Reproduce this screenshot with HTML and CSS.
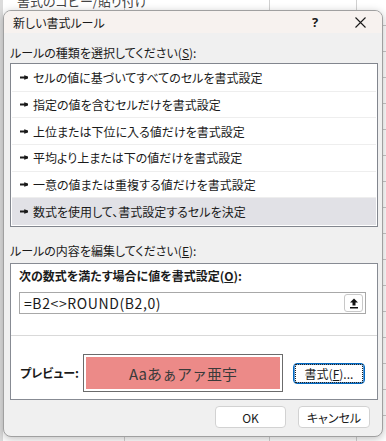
FILE: index.html
```html
<!DOCTYPE html>
<html lang="ja">
<head>
    <meta charset="UTF-8">
    <meta name="viewport" content="width=device-width, initial-scale=1.0">
    <title>新しい書式ルール</title>
    <link rel="stylesheet" href="styles.css">
</head>
<body>

    <span class="sheet-text">書式のコピー/貼り付け</span>

    <div class="dialog">
        <div class="titlebar">
            <span class="title">新しい書式ルール</span>
            <span class="help">?</span>
            <span class="close">
                <svg width="11" height="11" viewBox="0 0 11 11"><path d="M0.5 0.5L10.5 10.5M10.5 0.5L0.5 10.5" stroke="#1a1a1a" stroke-width="1.1" fill="none"/></svg>
            </span>
        </div>

        <div class="content">
            <div class="label">ルールの種類を選択してください(<u>S</u>):</div>
            <ul class="rules">
                <li><svg class="arrow" viewBox="0 0 8 5"><path d="M0 1.6h4.2V0.2L8 1.4v2.2L4.2 4.8V3.4H0z"/></svg>セルの値に基づいてすべてのセルを書式設定</li>
                <li><svg class="arrow" viewBox="0 0 8 5"><path d="M0 1.6h4.2V0.2L8 1.4v2.2L4.2 4.8V3.4H0z"/></svg>指定の値を含むセルだけを書式設定</li>
                <li><svg class="arrow" viewBox="0 0 8 5"><path d="M0 1.6h4.2V0.2L8 1.4v2.2L4.2 4.8V3.4H0z"/></svg>上位または下位に入る値だけを書式設定</li>
                <li><svg class="arrow" viewBox="0 0 8 5"><path d="M0 1.6h4.2V0.2L8 1.4v2.2L4.2 4.8V3.4H0z"/></svg>平均より上または下の値だけを書式設定</li>
                <li><svg class="arrow" viewBox="0 0 8 5"><path d="M0 1.6h4.2V0.2L8 1.4v2.2L4.2 4.8V3.4H0z"/></svg>一意の値または重複する値だけを書式設定</li>
                <li class="selected"><svg class="arrow" viewBox="0 0 8 5"><path d="M0 1.6h4.2V0.2L8 1.4v2.2L4.2 4.8V3.4H0z"/></svg>数式を使用して、書式設定するセルを決定</li>
            </ul>

            <div class="label label-edit">ルールの内容を編集してください(<u>E</u>):</div>
            <div class="editor">
                <div class="formula-section">
                    <div class="bold-label">次の数式を満たす場合に値を書式設定(<u>O</u>):</div>
                    <div class="formula">
                        <span class="formula-text">=B2&lt;&gt;ROUND(B2,0)</span>
                        <button class="collapse">
                            <svg width="10" height="12" viewBox="0 0 10 12"><path d="M5 1.5L9 5.5H6.5V8.5H3.5V5.5H1Z M1 10h8v1.4H1z" fill="#111"/></svg>
                        </button>
                    </div>
                </div>
                <div class="preview-section">
                    <span class="bold-label preview-label">プレビュー:</span>
                    <div class="preview"><div class="preview-fill">Aaあぁアァ亜宇</div></div>
                    <button class="format-btn"><span>書式(<u>F</u>)...</span></button>
                </div>
            </div>

            <div class="actions">
                <button class="btn btn-ok">OK</button>
                <button class="btn btn-cancel">キャンセル</button>
            </div>
        </div>
    </div>

</body>
</html>
```

FILE: styles.css
```css
* { box-sizing: border-box; }
body {
    margin: 0; width: 386px; height: 441px; overflow: hidden; position: relative;
    font-family: "Noto Sans CJK JP", "Noto Sans", sans-serif; font-size: 12px; color: #1a1a1a;
    font-feature-settings: "palt";
    background-color: #fff;
    background-image:
        linear-gradient(to right, #dcdcdc 0 3px, transparent 3px),
        linear-gradient(to right, transparent 124px, #d0d0d0 124px 125px, transparent 125px 269px, #d0d0d0 269px 270px, transparent 270px 356px, #d0d0d0 356px 357px, transparent 357px),
        repeating-linear-gradient(to bottom, transparent 0 25px, #c8c8c8 25px 26px);
}
.sheet-text { position: absolute; left: 17px; top: -9px; font-size: 13px; color: #444; }

.dialog { position: relative; margin: 10px 0 0 3px; width: 380px; height: 427px; background: #f0f0f0; border: 1px solid #a0a0a0; border-radius: 8px; box-shadow: 0 2px 8px rgba(0,0,0,0.25); overflow: hidden; }
.titlebar { display: flex; align-items: center; height: 22px; padding-left: 9px; background: #f7f2ef; }
.title { flex: 1; font-size: 12px; }
.help { width: 46px; text-align: center; font-size: 13px; font-weight: bold; font-family: "Noto Sans", sans-serif; }
.close { width: 44px; display: flex; justify-content: center; }

.content { padding: 0 4px 0 6px; }
.label { margin-top: 12px; line-height: 16px; }
.label-edit { margin-top: 16px; }

.rules { list-style: none; margin: 2px 0 0; padding: 1px; height: 164px; background: #fff; border: 1px solid #82868e; display: grid; grid-auto-rows: 1fr; }
.rules li { display: flex; align-items: center; padding-left: 8px; border-bottom: 1px solid #eeeeee; }
.rules li:last-child { border-bottom: none; }
.rules li.selected { background: #e1e1e6; }
.arrow { width: 8px; height: 5px; margin-right: 5px; fill: #1a1a1a; }

.editor { margin-top: 4px; height: 137px; background: #fff; border: 1px solid #878b93; }
.formula-section { height: 72px; padding: 4px 0 0 8px; border-bottom: 1px solid #d9d9d9; }
.bold-label { font-weight: bold; line-height: 16px; }
.formula { display: flex; align-items: center; justify-content: space-between; margin-top: 8px; width: 347px; height: 22px; border: 1px solid #a8a8a8; padding: 0 2px 0 4px; }
.formula-text { font-size: 14px; letter-spacing: 0.6px; font-feature-settings: normal; }
.collapse { width: 19px; height: 18px; padding: 0; display: flex; align-items: center; justify-content: center; background: #fff; border: 1px solid #c8c8c8; border-radius: 3px; }

.preview-section { display: flex; align-items: center; padding: 18px 0 0 9px; }
.preview-label { width: 63px; }
.preview { width: 200px; height: 38px; border: 1px solid #6b6b6b; padding: 2px; background: #fff; }
.preview-fill { height: 100%; background: #ec8a88; display: flex; align-items: center; justify-content: center; font-size: 15px; color: #3a3a3a; font-feature-settings: normal; }
.format-btn { margin-left: 10px; width: 72px; height: 21px; padding: 0; background: #fff; border: 1px solid #0067c0; box-shadow: inset 0 0 0 1px #5a9ad6; border-radius: 4px; font: inherit; color: inherit; display: flex; align-items: center; justify-content: center; }
.format-btn span { outline: 1px dotted #222; outline-offset: 1px; padding: 0 3px; width: 64px; height: 15px; line-height: 15px; text-align: center; }

.actions { display: flex; justify-content: flex-end; gap: 12px; margin-top: 6px; padding-right: 8px; }
.btn { height: 22px; background: #fff; border: 1px solid #d2d2d2; border-radius: 4px; font: inherit; color: inherit; padding: 0; }
.btn-ok { width: 71px; }
.btn-cancel { width: 72px; }
```
